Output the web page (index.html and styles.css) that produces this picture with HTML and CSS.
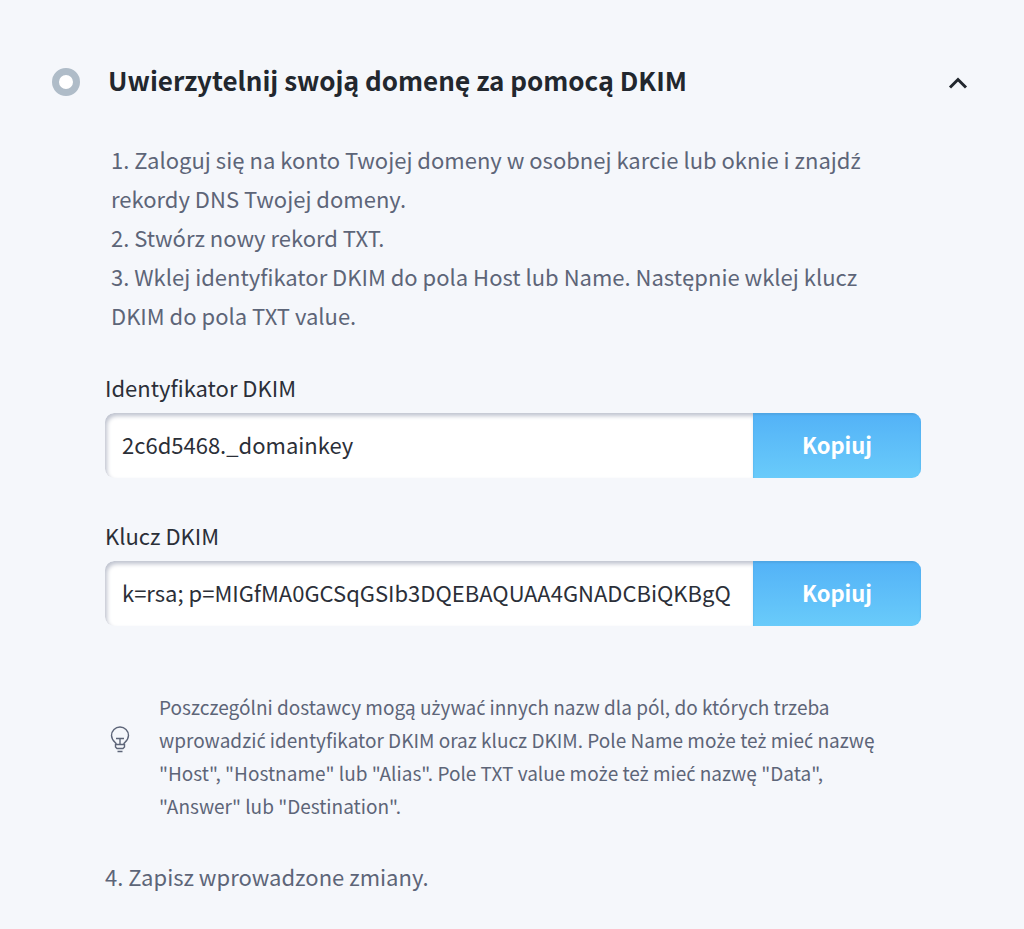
FILE: index.html
```html
<!DOCTYPE html>
<html lang="pl">
<head>
<meta charset="utf-8">
<meta name="viewport" content="width=device-width, initial-scale=1">
<title>DKIM</title>
<link rel="stylesheet" href="styles.css">
</head>
<body>
<main class="step">
  <header class="step-header">
    <span class="status"></span>
    <h1 class="title">Uwierzytelnij swoją domenę za pomocą DKIM</h1>
    <button class="toggle" type="button" aria-label="Zwiń" aria-expanded="true">
      <svg width="20" height="14" viewBox="0 0 20 14" fill="none" stroke="currentColor" stroke-width="3"><path d="M2 11.5 10 3.500l8 8"/></svg>
    </button>
  </header>
  <div class="content">
    <div class="instructions">
      <p>1. Zaloguj się na konto Twojej domeny w osobnej karcie lub oknie i znajd<span class="pl">ź</span> rekordy DNS Twojej domeny.</p>
      <p>2. Stwórz nowy rekord TXT.</p>
      <p>3. Wklej identyfikator DKIM do pola Host lub Name. Następnie wklej klucz DKIM do pola TXT value.</p>
    </div>
    <div class="field">
      <label for="dkim-id">Identyfikator DKIM</label>
      <div class="copy-row">
        <input id="dkim-id" type="text" readonly value="2c6d5468._domainkey">
        <button type="button">Kopiuj</button>
      </div>
    </div>
    <div class="field">
      <label for="dkim-key">Klucz DKIM</label>
      <div class="copy-row">
        <input id="dkim-key" type="text" readonly value="k=rsa; p=MIGfMA0GCSqGSIb3DQEBAQUAA4GNADCBiQKBgQ">
        <button type="button">Kopiuj</button>
      </div>
    </div>
    <aside class="note">
      <svg class="bulb" width="20" height="28" viewBox="0 0 20 28" fill="none" stroke="currentColor" stroke-width="1.400"><path d="M6 19v-1.500C4.500 15.800 1.500 13.500 1.500 9.500a8.500 8.500 0 0 1 17 0c0 4-3 6.300-4.500 8V19"/><path d="M6 12.500h8M10 12.500V18M5.500 18.500h9v2.500l-1.500 1.500H7L5.500 21zM7.500 25.500h5"/></svg>
      <p>Poszczególni dostawcy mogą u<span class="pl">ż</span>ywa<span class="pl">ć</span> innych nazw dla pól, do których trzeba wprowadzi<span class="pl">ć</span> identyfikator DKIM oraz klucz DKIM. Pole Name mo<span class="pl">ż</span>e te<span class="pl">ż</span> mie<span class="pl">ć</span> nazwę "Host", "Hostname" lub "Alias". Pole TXT value mo<span class="pl">ż</span>e te<span class="pl">ż</span> mie<span class="pl">ć</span> nazwę "Data", "Answer" lub "Destination".</p>
    </aside>
    <p class="last">4. Zapisz wprowadzone zmiany.</p>
  </div>
</main>
</body>
</html>
```
FILE: styles.css
```css
* { box-sizing: border-box; }
body {
  margin: 0;
  background: #f5f7fb;
  color: #2b2f38;
  font-family: "Noto Sans CJK SC", "Noto Sans", sans-serif;
  font-size: 22px;
}
p, h1 { margin: 0; }
/* Letters the main family lacks as single glyphs */
.pl { font-family: "Noto Sans", sans-serif; line-height: 1; }
.step { padding: 60px 52px 32px; }
.step-header { display: flex; align-items: center; }
.status {
  width: 28px;
  height: 28px;
  margin: 4px 28px 0 0;
  border: 7px solid #afbcc8;
  border-radius: 50%;
  background: #fff;
}
.title {
  flex: 1;
  color: #22272e;
  font-size: 26px;
  line-height: 40px;
  font-weight: 700;
}
.toggle {
  display: flex;
  margin-top: 6px;
  padding: 4px;
  border: 0;
  background: none;
  color: #22272e;
}
.content { padding: 40px 51px 0 53px; }
.instructions {
  padding: 0 32px 0 6px;
  color: #5d6578;
  line-height: 39px;
}
.field { margin-top: 34px; }
.field + .field { margin-top: 39px; }
.field label {
  display: block;
  margin-bottom: 8px;
  line-height: 36px;
}
.copy-row { display: flex; height: 65px; border-radius: 9px; overflow: hidden; }
.copy-row input {
  flex: 1;
  min-width: 0;
  padding: 0 17px 4px;
  border: 0;
  border-radius: 9px 0 0 9px;
  background: #fff;
  box-shadow: inset 2px 3px 4px #bfc3cf;
  color: inherit;
  font: inherit;
}
.copy-row button {
  width: 168px;
  padding: 0 0 4px;
  border: 0;
  background: linear-gradient(#53b2f7, #69cbfa);
  box-shadow: inset 0 2px 2px #4fa6e4;
  color: #fff;
  font: inherit;
  font-weight: 700;
}
.note {
  display: flex;
  align-items: center;
  gap: 29px;
  margin-top: 64px;
  padding: 0 16px 0 5px;
  color: #5d6578;
  font-size: 19px;
  line-height: 33px;
}
.bulb { flex: none; margin-bottom: 32px; }
.last { margin-top: 35px; color: #5d6578; line-height: 39px; }
```
